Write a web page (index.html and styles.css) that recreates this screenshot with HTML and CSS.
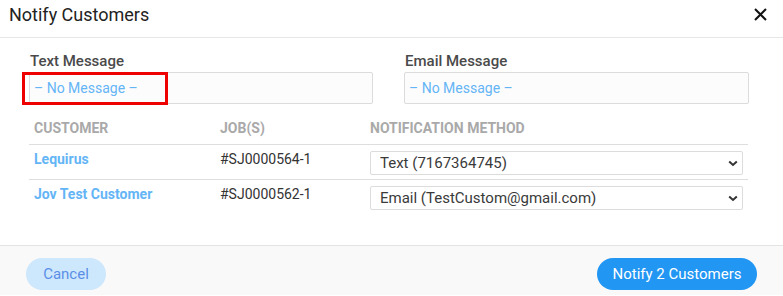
FILE: index.html
```html
<!DOCTYPE html>
<html lang="en">
<head>
    <meta charset="UTF-8">
    <meta name="viewport" content="width=device-width, initial-scale=1.0">
    <title>Notify Customers</title>
    <link rel="stylesheet" href="styles.css">
</head>
<body>

    <!-- Шапка окна -->
    <div class="modal-header">
        <h3 class="modal-title">Notify Customers</h3>
        <button class="close-btn" type="button" aria-label="Close">
            <svg width="13" height="13" viewBox="0 0 13 13">
                <path d="M1 1 L12 12 M12 1 L1 12" stroke="#111" stroke-width="2" fill="none"/>
            </svg>
        </button>
    </div>

    <div class="modal-body">
        <!-- Шаблоны сообщений -->
        <div class="messages">
            <div class="message-field">
                <label class="field-label">Text Message</label>
                <div class="message-box highlighted">
                    <span class="placeholder">– No Message –</span>
                    <span class="highlight-frame"></span>
                </div>
            </div>
            <div class="message-field">
                <label class="field-label">Email Message</label>
                <div class="message-box">
                    <span class="placeholder">– No Message –</span>
                </div>
            </div>
        </div>

        <!-- Список клиентов -->
        <table class="customers">
            <tr>
                <th class="col-customer">Customer</th>
                <th class="col-job">Job(s)</th>
                <th>Notification Method</th>
            </tr>
            <tr>
                <td><a class="customer-link" href="#">Lequirus</a></td>
                <td class="job">#SJ0000564-1</td>
                <td>
                    <div class="select-wrap">
                        <select class="method">
                            <option>Text (7167364745)</option>
                        </select>
                        <svg class="chevron" width="10" height="7" viewBox="0 0 10 7">
                            <path d="M1.2 1.5 L5 5 L8.8 1.5" stroke="#333" stroke-width="2" fill="none"/>
                        </svg>
                    </div>
                </td>
            </tr>
            <tr>
                <td><a class="customer-link" href="#">Jov Test Customer</a></td>
                <td class="job">#SJ0000562-1</td>
                <td>
                    <div class="select-wrap">
                        <select class="method">
                            <option>Email (TestCustom@gmail.com)</option>
                        </select>
                        <svg class="chevron" width="10" height="7" viewBox="0 0 10 7">
                            <path d="M1.2 1.5 L5 5 L8.8 1.5" stroke="#333" stroke-width="2" fill="none"/>
                        </svg>
                    </div>
                </td>
            </tr>
        </table>
    </div>

    <!-- Кнопки -->
    <div class="modal-footer">
        <button class="btn btn-cancel" type="button">Cancel</button>
        <button class="btn btn-primary" type="button">Notify 2 Customers</button>
    </div>

</body>
</html>
```

FILE: styles.css
```css
/* Основные стили */
body {
    margin: 0;
    font-family: Roboto, "Liberation Sans", Arial, sans-serif;
    background: #fff;
    color: #333;
}

/* Шапка */
.modal-header {
    display: flex;
    justify-content: space-between;
    align-items: flex-start;
    height: 32px;
    padding: 5px 16px 0 9px;
    border-bottom: 1px solid #e6e6e6;
}
.modal-title {
    margin: 0;
    font-size: 18px;
    font-weight: 400;
    line-height: 20px;
    color: #222;
}
.close-btn {
    border: none;
    background: none;
    padding: 0;
    margin-top: 3px;
    width: 13px;
    height: 13px;
    display: flex;
}

/* Тело окна */
.modal-body {
    padding: 13px 34px 30px 29px;
}
.messages {
    display: grid;
    grid-template-columns: 344px 345px;
    column-gap: 31px;
}
.field-label {
    display: block;
    font-size: 15px;
    font-weight: 500;
    line-height: 20px;
    color: #4a4a4a;
    margin: 0 0 1px 1px;
}
.message-box {
    position: relative;
    display: flex;
    align-items: center;
    height: 32px;
    box-sizing: border-box;
    padding-left: 4px;
    border: 1px solid #dcdcdc;
    border-radius: 2px;
    background: #fcfcfc;
}
.placeholder {
    font-size: 14px;
    color: #64b5f6;
}
/* Красная рамка поверх поля */
.highlight-frame {
    position: absolute;
    left: -8px;
    top: -1px;
    width: 146px;
    height: 33px;
    box-sizing: border-box;
    border: 3px solid #ee0000;
}

/* Таблица клиентов */
.customers {
    width: 719px;
    margin-top: 11px;
    border-collapse: collapse;
}
.customers th {
    text-align: left;
    text-transform: uppercase;
    font-size: 14px;
    font-weight: 700;
    color: #a9a9a9;
    line-height: 16px;
    padding: 5px 5px 8px;
    border-bottom: 1px solid #dedede;
}
.col-customer {
    width: 176px;
}
.col-job {
    width: 140px;
}
.customers td {
    height: 35px;
    padding: 6px 5px 0;
    box-sizing: border-box;
    vertical-align: top;
    font-size: 14px;
    line-height: 16px;
}
.customers tr + tr + tr td {
    border-top: 1px solid #dedede;
}
.customer-link {
    font-size: 14px;
    font-weight: 700;
    color: #64b5f6;
    text-decoration: none;
}
.job {
    color: #333;
}

/* Выпадающий список */
.select-wrap {
    position: relative;
}
.method {
    appearance: none;
    -webkit-appearance: none;
    width: 373px;
    height: 24px;
    padding: 0 9px;
    border: 1px solid #dcdcdc;
    border-radius: 2px;
    background: #fff;
    font-family: inherit;
    font-size: 15px;
    color: #3a3a3a;
    display: block;
}
.chevron {
    position: absolute;
    right: 5px;
    top: 9px;
    pointer-events: none;
}

/* Подвал */
.modal-footer {
    display: flex;
    justify-content: space-between;
    padding: 12px 26px 5px;
    border-top: 1px solid #e3e3e3;
    background: #f9f9f9;
}
.btn {
    height: 32px;
    border: none;
    border-radius: 16px;
    font-family: inherit;
    font-size: 15px;
    padding: 0 15px;
}
.btn-cancel {
    width: 80px;
    background: #cde7fd;
    color: #5b8fe6;
}
.btn-primary {
    width: 160px;
    background: #2196f3;
    color: #fff;
}
```
